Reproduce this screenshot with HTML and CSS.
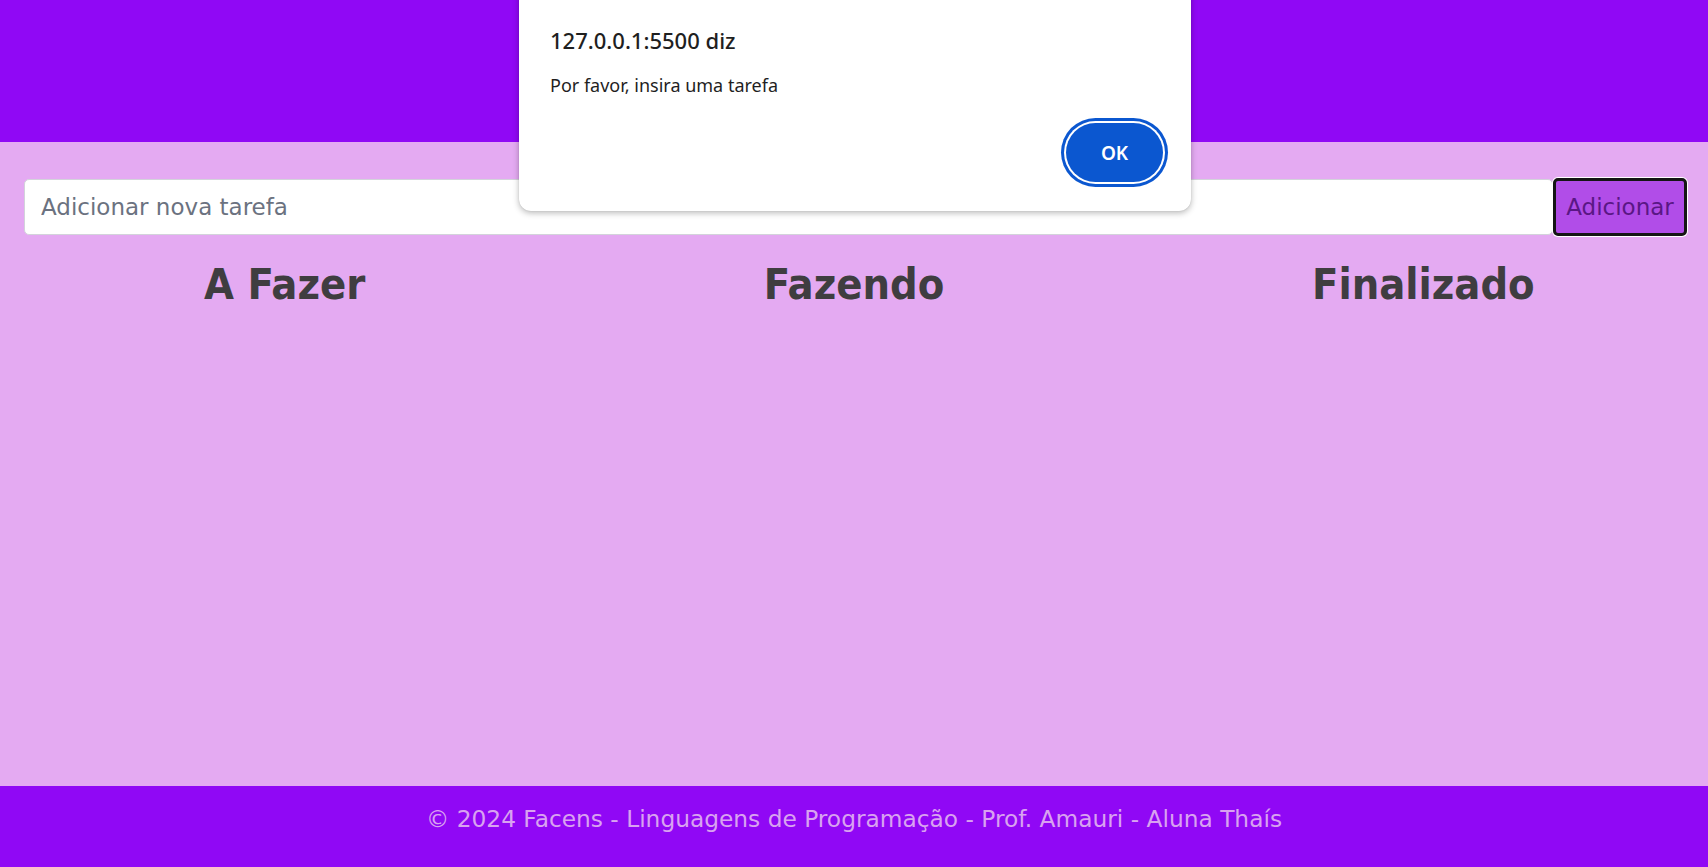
FILE: index.html
```html
<!DOCTYPE html>
<html lang="pt-BR">
<head>
<meta charset="utf-8">
<title>Kanban</title>
<link rel="stylesheet" href="styles.css">
</head>
<body>
<header class="topo"></header>
<main class="conteudo">
  <form class="nova-tarefa">
    <input class="campo" type="text" placeholder="Adicionar nova tarefa">
    <button class="botao" type="button">Adicionar</button>
  </form>
  <section class="quadro">
    <div class="coluna"><h2 class="titulo-coluna">A Fazer</h2></div>
    <div class="coluna"><h2 class="titulo-coluna">Fazendo</h2></div>
    <div class="coluna"><h2 class="titulo-coluna">Finalizado</h2></div>
  </section>
</main>
<footer class="rodape">© 2024 Facens - Linguagens de Programação - Prof. Amauri - Aluna Thaís</footer>

<div class="alerta" role="alertdialog">
  <div class="alerta-titulo">127.0.0.1:5500 diz</div>
  <div class="alerta-msg">Por favor, insira uma tarefa</div>
  <div class="alerta-acoes"><button class="alerta-ok" type="button">OK</button></div>
</div>
</body>
</html>
```
FILE: styles.css
```css
html, body {
  margin: 0;
  padding: 0;
}
body {
  min-height: 100vh;
  display: flex;
  flex-direction: column;
  background: #e4aaf2;
  font-family: "DejaVu Sans", Verdana, sans-serif;
  overflow: hidden;
}
.topo {
  height: 142px;
  background: #9008f5;
  flex: none;
}
.conteudo {
  flex: 1;
  padding-top: 36px;
}
.nova-tarefa {
  display: flex;
  align-items: center;
  margin: 0 21px 0 24px;
}
.campo {
  flex: 1;
  height: 56px;
  box-sizing: border-box;
  border: 1px solid #d3d3db;
  border-radius: 5px;
  background: #fff;
  padding: 0 16px;
  font-family: "DejaVu Sans", Verdana, sans-serif;
  font-size: 23px;
  color: #333;
  outline: none;
}
.campo::placeholder {
  color: #6b7280;
}
.botao {
  width: 134px;
  height: 58px;
  box-sizing: border-box;
  margin-left: 0;
  border: 3px solid #151515;
  border-radius: 5px;
  box-shadow: 0 0 0 1px #fff;
  background: #b14de8;
  color: #5a1785;
  font-family: "DejaVu Sans", Verdana, sans-serif;
  font-size: 23px;
  padding: 0;
}
.quadro {
  display: grid;
  grid-template-columns: repeat(3, 1fr);
  margin-top: 24px;
}
.coluna {
  text-align: center;
}
.titulo-coluna {
  margin: 0;
  font-family: "DejaVu Sans Condensed", "DejaVu Sans", sans-serif;
  font-weight: bold;
  font-size: 43px;
  line-height: 48px;
  color: #3f3d40;
}
.rodape {
  flex: none;
  height: 81px;
  box-sizing: border-box;
  padding-top: 19px;
  background: #9008f5;
  color: #d9a2f0;
  text-align: center;
  font-size: 23.3px;
}
.alerta {
  position: absolute;
  left: 519px;
  top: -20px;
  width: 672px;
  box-sizing: border-box;
  padding: 45px 28px 29px 31px;
  background: #fff;
  border-radius: 12px;
  box-shadow: 0 2px 6px rgba(0, 0, 0, 0.28), 0 0 1px rgba(0, 0, 0, 0.2);
  font-family: "Noto Sans", "Open Sans", sans-serif;
  color: #1f1f1f;
}
.alerta-titulo {
  font-size: 22px;
  font-weight: 500;
  line-height: 30px;
}
.alerta-msg {
  margin-top: 18px;
  font-size: 18px;
  line-height: 24px;
}
.alerta-acoes {
  display: flex;
  justify-content: flex-end;
  margin-top: 26px;
}
.alerta-ok {
  width: 97px;
  height: 59px;
  border: none;
  border-radius: 30px;
  background: #0b57d0;
  color: #fff;
  font-family: "Noto Sans", "Open Sans", sans-serif;
  font-size: 19px;
  font-weight: 600;
  box-shadow: 0 0 0 2px #fff, 0 0 0 5px #0b57d0;
  padding: 0;
}
```
